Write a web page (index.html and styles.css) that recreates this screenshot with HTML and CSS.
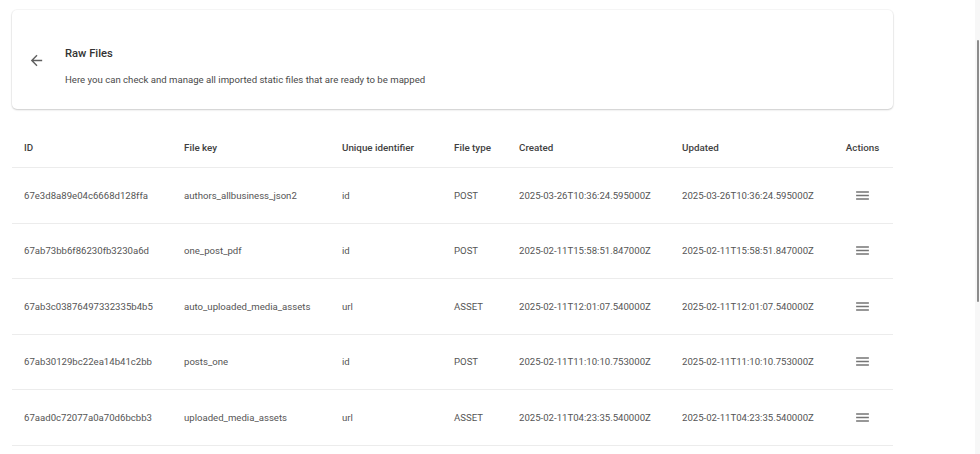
FILE: index.html
```html
<!DOCTYPE html>
<html lang="en">
<head>
<meta charset="utf-8">
<title>Raw Files</title>
<link rel="stylesheet" href="styles.css">
</head>
<body>
<div class="page">
  <div class="card">
    <svg class="back" viewBox="0 0 24 24" width="17" height="17"><path d="M20 11H7.83l5.59-5.59L12 4l-8 8 8 8 1.41-1.41L7.83 13H20v-2z" fill="#5f5f5f"/></svg>
    <div class="card-text">
      <div class="title">Raw Files</div>
      <div class="subtitle">Here you can check and manage all imported static files that are ready to be mapped</div>
    </div>
  </div>

  <div class="table">
    <div class="row head">
      <div class="cell">ID</div>
      <div class="cell">File key</div>
      <div class="cell">Unique identifier</div>
      <div class="cell">File type</div>
      <div class="cell">Created</div>
      <div class="cell">Updated</div>
      <div class="cell act">Actions</div>
    </div>
    <div class="row">
      <div class="cell">67e3d8a89e04c6668d128ffa</div>
      <div class="cell">authors_allbusiness_json2</div>
      <div class="cell">id</div>
      <div class="cell">POST</div>
      <div class="cell">2025-03-26T10:36:24.595000Z</div>
      <div class="cell">2025-03-26T10:36:24.595000Z</div>
      <div class="cell act"><svg class="menu" viewBox="0 0 24 24" width="17" height="17"><path d="M3 18h18v-2H3v2zm0-5h18v-2H3v2zm0-7v2h18V6H3z" fill="#757575"/></svg></div>
    </div>
    <div class="row">
      <div class="cell">67ab73bb6f86230fb3230a6d</div>
      <div class="cell">one_post_pdf</div>
      <div class="cell">id</div>
      <div class="cell">POST</div>
      <div class="cell">2025-02-11T15:58:51.847000Z</div>
      <div class="cell">2025-02-11T15:58:51.847000Z</div>
      <div class="cell act"><svg class="menu" viewBox="0 0 24 24" width="17" height="17"><path d="M3 18h18v-2H3v2zm0-5h18v-2H3v2zm0-7v2h18V6H3z" fill="#757575"/></svg></div>
    </div>
    <div class="row">
      <div class="cell">67ab3c03876497332335b4b5</div>
      <div class="cell">auto_uploaded_media_assets</div>
      <div class="cell">url</div>
      <div class="cell">ASSET</div>
      <div class="cell">2025-02-11T12:01:07.540000Z</div>
      <div class="cell">2025-02-11T12:01:07.540000Z</div>
      <div class="cell act"><svg class="menu" viewBox="0 0 24 24" width="17" height="17"><path d="M3 18h18v-2H3v2zm0-5h18v-2H3v2zm0-7v2h18V6H3z" fill="#757575"/></svg></div>
    </div>
    <div class="row">
      <div class="cell">67ab30129bc22ea14b41c2bb</div>
      <div class="cell">posts_one</div>
      <div class="cell">id</div>
      <div class="cell">POST</div>
      <div class="cell">2025-02-11T11:10:10.753000Z</div>
      <div class="cell">2025-02-11T11:10:10.753000Z</div>
      <div class="cell act"><svg class="menu" viewBox="0 0 24 24" width="17" height="17"><path d="M3 18h18v-2H3v2zm0-5h18v-2H3v2zm0-7v2h18V6H3z" fill="#757575"/></svg></div>
    </div>
    <div class="row">
      <div class="cell">67aad0c72077a0a70d6bcbb3</div>
      <div class="cell">uploaded_media_assets</div>
      <div class="cell">url</div>
      <div class="cell">ASSET</div>
      <div class="cell">2025-02-11T04:23:35.540000Z</div>
      <div class="cell">2025-02-11T04:23:35.540000Z</div>
      <div class="cell act"><svg class="menu" viewBox="0 0 24 24" width="17" height="17"><path d="M3 18h18v-2H3v2zm0-5h18v-2H3v2zm0-7v2h18V6H3z" fill="#757575"/></svg></div>
    </div>
  </div>
</div>
<div class="scrollbar"><div class="thumb"></div></div>
</body>
</html>
```

FILE: styles.css
```css
html, body {
  margin: 0;
  padding: 0;
  background: #ffffff;
  overflow: hidden;
}
body {
  font-family: Roboto, "Liberation Sans", Arial, sans-serif;
  font-size: 9.6px;
  color: #555;
}
.page {
  width: 881px;
  padding: 10px 0 0 12px;
}
.card {
  display: flex;
  align-items: flex-start;
  height: 99px;
  box-sizing: border-box;
  padding: 37px 0 0 16px;
  background: #fff;
  border-radius: 5px;
  box-shadow: 0 1px 2px rgba(0,0,0,0.18), 0 0 0 1px rgba(0,0,0,0.03);
}
.back {
  flex: none;
  margin-top: 4.5px;
}
.card-text {
  margin-left: 20px;
}
.title {
  font-size: 11.2px;
  font-weight: 500;
  color: #333;
  line-height: 14px;
}
.subtitle {
  margin-top: 12px;
  line-height: 14px;
  color: #4a4a4a;
}
.table {
  margin-top: 18px;
}
.row {
  display: grid;
  grid-template-columns: 160px 158px 112px 65px 163px 164px 1fr;
  align-items: center;
  height: 55.5px;
  border-bottom: 1px solid #ececec;
  box-sizing: border-box;
}
.row.head {
  height: 41px;
  font-size: 9.8px;
  font-weight: 500;
  color: #3f3f3f;
}
.cell {
  padding: 0 12px;
  white-space: nowrap;
}
.cell.act {
  text-align: center;
  display: flex;
  justify-content: center;
  padding: 0 12px 0 10px;
}
.menu {
  display: block;
}
.scrollbar {
  position: fixed;
  right: 0;
  top: 0;
  width: 5px;
  height: 100%;
  background: #f7f7f7;
}
.thumb {
  position: absolute;
  right: 1px;
  top: 40px;
  width: 2px;
  height: 262px;
  background: #8c8c8c;
  border-radius: 1px;
}
```
